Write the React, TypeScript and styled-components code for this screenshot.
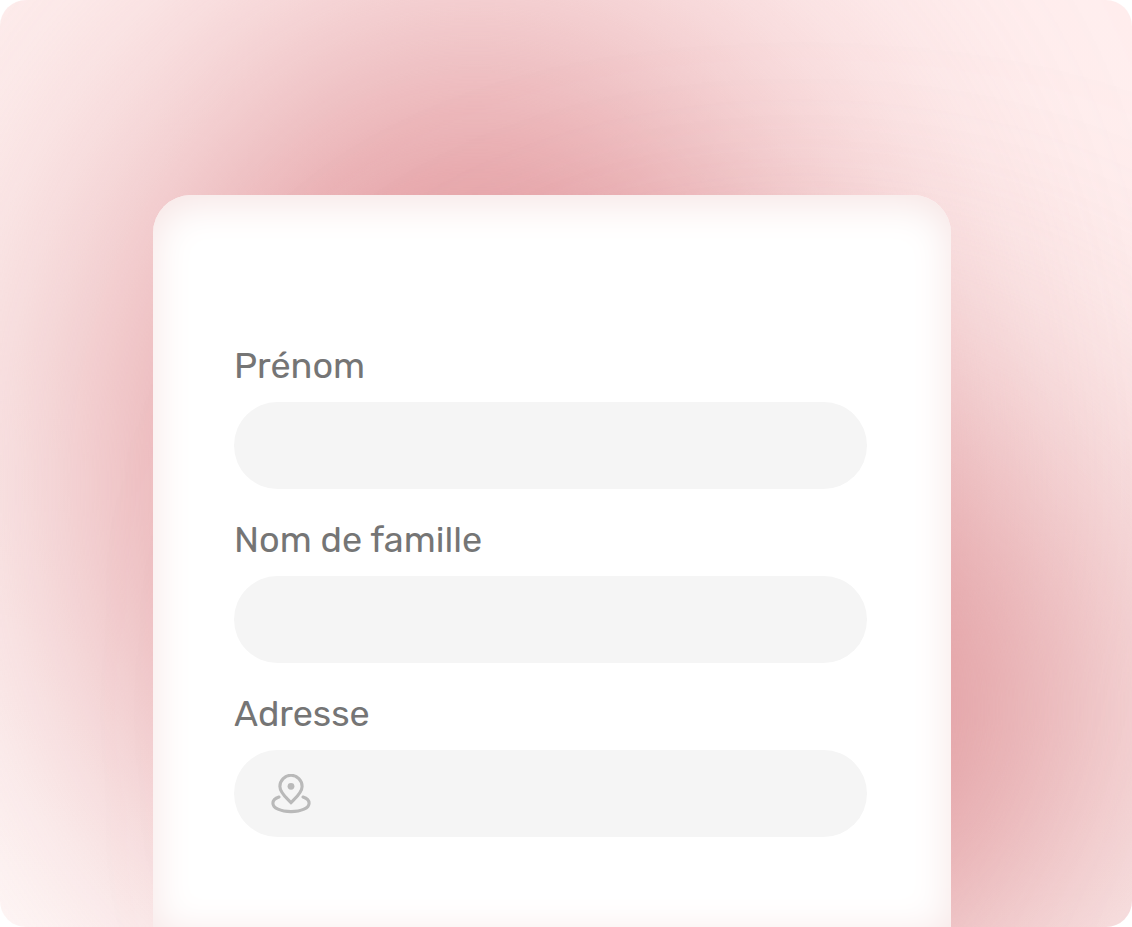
import React, { useId } from "react";
import styled, { createGlobalStyle } from "styled-components";

const GlobalStyle = createGlobalStyle`
  * {
    box-sizing: border-box;
  }

  body {
    margin: 0;
    background: #ffffff;
    font-family: Rubik, Roboto, sans-serif;
  }
`;

const Page = styled.main`
  position: relative;
  isolation: isolate;
  display: flex;
  min-height: 100vh;
  padding: 195px 181px 0 153px;
  overflow: hidden;
  border-radius: 26px;
  background: linear-gradient(20deg, #fffaf9 0%, #fdf0ef 45%, #ffeeee 100%);
`;

const Glow = styled.div`
  position: absolute;
  z-index: -1;
  border-radius: 50%;
  filter: blur(170px);
`;

const UpperGlow = styled(Glow)`
  top: 20px;
  left: 120px;
  width: 710px;
  height: 930px;
  background: #df9096;
`;

const LowerGlow = styled(Glow)`
  top: 430px;
  left: 480px;
  width: 640px;
  height: 560px;
  background: #dd8f94;
`;

const Card = styled.form`
  flex: 1;
  min-width: 0;
  display: flex;
  flex-direction: column;
  gap: 29px;
  padding: 149px 84px 90px 81px;
  border-radius: 38px 38px 0 0;
  background: #ffffff;
  box-shadow: inset 0 8px 40px #f6e4e3;
`;

const FieldGroup = styled.div`
  display: flex;
  flex-direction: column;
  gap: 14px;
`;

const Label = styled.label`
  color: #757575;
  font-size: 36px;
  line-height: 44px;
`;

const InputShell = styled.div`
  display: flex;
  align-items: center;
  gap: 16px;
  height: 87px;
  padding: 0 37px;
  border-radius: 44px;
  background: #f5f5f5;
`;

const TextInput = styled.input`
  flex: 1;
  min-width: 0;
  height: 100%;
  padding: 0;
  border: 0;
  outline: 0;
  background: transparent;
  color: #757575;
  font-family: inherit;
  font-size: 36px;
`;

const PinIcon = () => (
  <svg width="40" height="40" viewBox="0 0 40 40" fill="none" aria-hidden="true">
    <path
      d="M20 28.6C15.6 24 8.9 18.8 8.9 12.4a11.1 11.1 0 0 1 22.2 0C31.1 18.8 24.4 24 20 28.6Z"
      stroke="#b9b9b9"
      strokeWidth="3.1"
    />
    <circle cx="20" cy="12.3" r="3.4" fill="#b9b9b9" />
    <path
      d="M8 23C4 24.3 1.9 26.6 1.9 29.2c0 4.8 7.6 8.4 18.1 8.4s18.1-3.6 18.1-8.4c0-2.6-2.1-4.9-6.1-6.2"
      stroke="#b9b9b9"
      strokeWidth="3.1"
      strokeLinecap="round"
    />
  </svg>
);

interface FieldProps {
  label: string;
  name: string;
  autoComplete: string;
  icon?: React.ReactNode;
}

const Field = ({ label, name, autoComplete, icon }: FieldProps) => {
  const id = useId();
  return (
    <FieldGroup>
      <Label htmlFor={id}>{label}</Label>
      <InputShell>
        {icon}
        <TextInput id={id} name={name} type="text" autoComplete={autoComplete} />
      </InputShell>
    </FieldGroup>
  );
};

export default function App() {
  return (
    <>
      <GlobalStyle />
      <Page>
        <UpperGlow />
        <LowerGlow />
        <Card>
          <Field label="Prénom" name="firstName" autoComplete="given-name" />
          <Field label="Nom de famille" name="lastName" autoComplete="family-name" />
          <Field label="Adresse" name="address" autoComplete="street-address" icon={<PinIcon />} />
        </Card>
      </Page>
    </>
  );
}
